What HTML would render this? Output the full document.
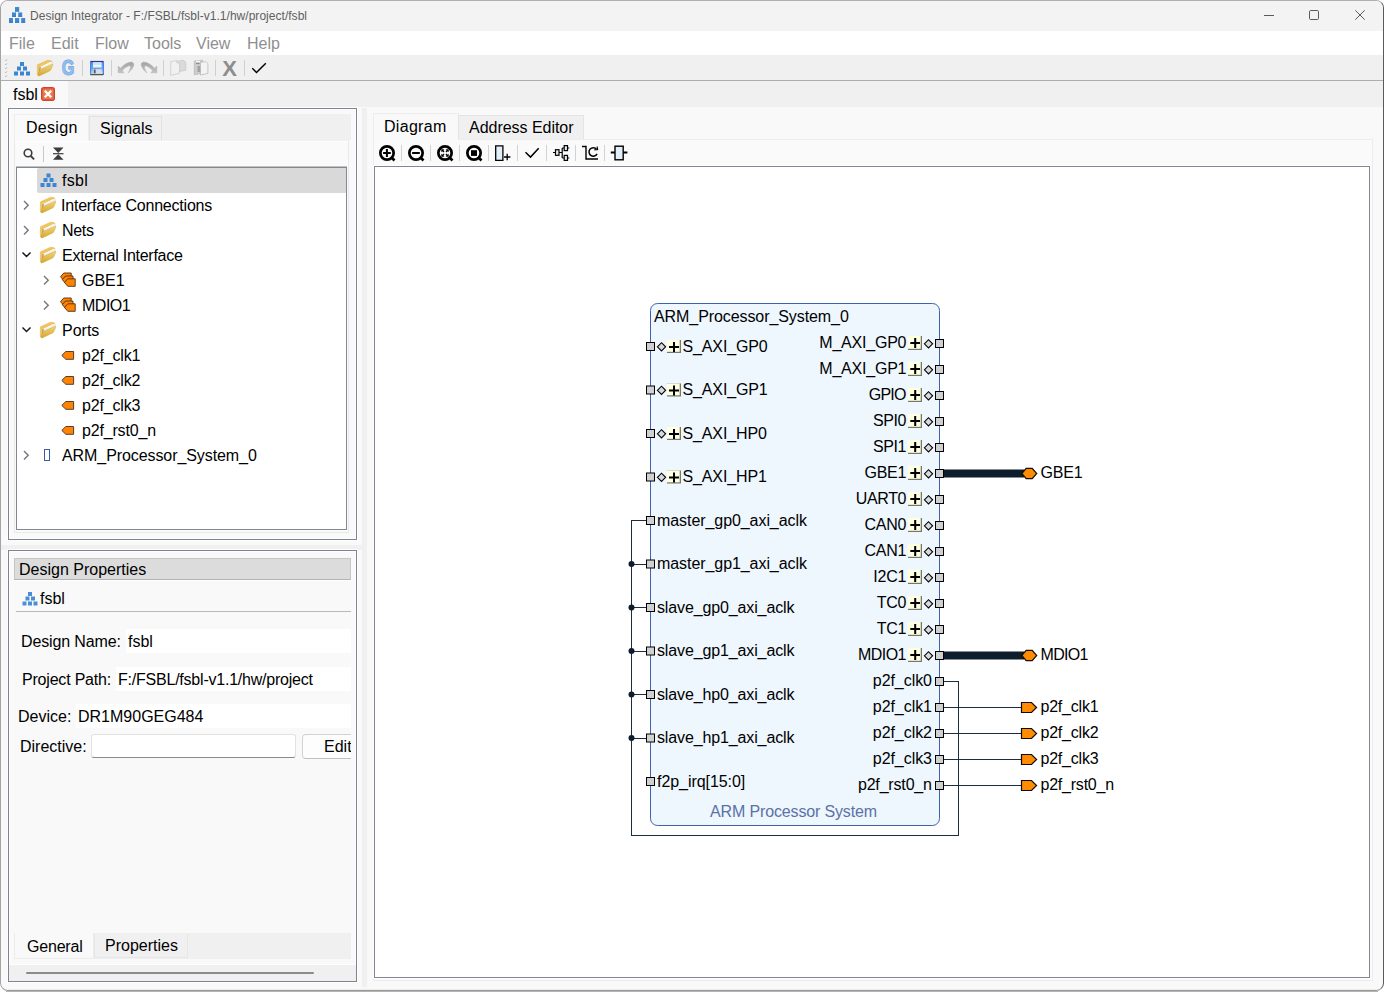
<!DOCTYPE html>
<html><head><meta charset="utf-8"><title>Design Integrator</title>
<style>
*{box-sizing:border-box;margin:0;padding:0}
html,body{width:1384px;height:992px;overflow:hidden;background:#fff}
body{position:relative;font-family:"Liberation Sans",sans-serif;font-size:16px;color:#000}
.a{position:absolute}
.t{position:absolute;white-space:nowrap;line-height:20px;height:20px}
#win{left:0;top:0;width:1384px;height:991px;border:1px solid #9a9a9a;border-left-color:#a4a4a4;border-right-color:#5a5a5a;border-top-color:#b0b0b0;border-radius:8px;background:#f9f9f9;overflow:hidden}
.frame{border:1px solid #7d8390;box-shadow:inset 1px 1px 0 #fff, inset -1px -1px 0 #fff, 0 0 0 1px #fefefe}
.sunk{border:1px solid #818793;background:#fff}
.sep{position:absolute;width:1px;background:#cfcfcf}
</style></head><body>
<div id="win" class="a"></div>
<!-- title bar -->
<div class="a" style="left:1px;top:1px;width:1382px;height:30px;background:#f3f3f3;border-radius:7px 7px 0 0"></div>
<svg class="a" style="left:8px;top:6px" width="18" height="18" viewBox="0 0 18 18">
<defs><linearGradient id="pb" x1="0" y1="0" x2="0" y2="1"><stop offset="0" stop-color="#3f8fd8"/><stop offset="1" stop-color="#3a7fc4"/></linearGradient></defs>
<g fill="url(#pb)"><rect x="7" y="1" width="4.2" height="4.8"/><rect x="4" y="6.4" width="4" height="4.6"/><rect x="10.2" y="6.4" width="4" height="4.6"/><rect x="1" y="12" width="4" height="5"/><rect x="7" y="12" width="4.2" height="5"/><rect x="13.2" y="12" width="4" height="5"/></g>
</svg>
<div class="t" style="left:30px;top:6px;font-size:12px;color:#5f5f5f;letter-spacing:0.03px">Design Integrator - F:/FSBL/fsbl-v1.1/hw/project/fsbl</div>
<svg class="a" style="left:1255px;top:5px" width="120" height="20" viewBox="0 0 120 20" fill="none" stroke="#5a5a5a" stroke-width="1">
<path d="M9 10.5h10"/><rect x="54.5" y="5.5" width="9" height="9" rx="1.2"/><path d="M100.3 5.3l9.4 9.4M109.7 5.3l-9.4 9.4"/>
</svg>
<!-- menu bar -->
<div class="a" style="left:1px;top:31px;width:1382px;height:24px;background:#fff"></div>
<div class="t mn" style="left:9px">File</div>
<div class="t mn" style="left:51px">Edit</div>
<div class="t mn" style="left:95px">Flow</div>
<div class="t mn" style="left:144px">Tools</div>
<div class="t mn" style="left:196px">View</div>
<div class="t mn" style="left:247px">Help</div>
<style>.mn{top:34px;color:#8f8f8f;font-size:16px}</style>
<!-- toolbar -->
<div class="a" style="left:1px;top:55px;width:1382px;height:25px;background:#f0f0f0"></div>
<div class="a" style="left:1px;top:80px;width:1382px;height:1px;background:#adadad"></div>
<!-- doc tab strip -->
<div class="a" style="left:1px;top:81px;width:1382px;height:26px;background:#f0f0f0"></div>
<div class="a" style="left:1px;top:81px;width:67px;height:26px;background:#f9f9f9"></div>
<div class="t" style="left:13px;top:85px">fsbl</div>
<svg class="a" style="left:41px;top:87px" width="14" height="14" viewBox="0 0 14 14"><rect x="0.7" y="0.7" width="12.6" height="12.6" rx="2" fill="#e47a4f" stroke="#d93c2b" stroke-width="1.400"/><path d="M3.800 3.800l6.400 6.400M10.200 3.800l-6.400 6.400" stroke="#fff" stroke-width="2.300"/></svg>
<div class="a" style="left:6px;top:991px;width:1372px;height:1px;background:#b4b4b4"></div>
<div class="a" style="left:8px;top:989px;width:1368px;height:1px;background:#ececec"></div>
<!-- main toolbar icons -->
<svg class="a" style="left:0;top:55px" width="280" height="26" viewBox="0 0 280 26">
<defs>
<linearGradient id="fy" x1="0" y1="0" x2="0" y2="1"><stop offset="0" stop-color="#f3d57a"/><stop offset="1" stop-color="#d6a62c"/></linearGradient>
<linearGradient id="sv" x1="0" y1="0" x2="0" y2="1"><stop offset="0" stop-color="#4f86ea"/><stop offset="0.6" stop-color="#6fa8f4"/><stop offset="1" stop-color="#b4dcff"/></linearGradient>
<linearGradient id="gr" x1="0" y1="0" x2="0" y2="1"><stop offset="0" stop-color="#a2a2a2"/><stop offset="1" stop-color="#c4c4c4"/></linearGradient>
<g id="foldT"><path d="M0.400 4.800L10 0.400Q10.800 0.100 11.800 0.300L14.200 0.800Q15 1.100 15 2L15 4.500L3 10L1.200 14.800Q0.300 14.800 0.300 13.500Z" fill="#f3c45c" stroke="#dca93c" stroke-width="0.4"/>
<path d="M2 14L3.200 7L14.300 1.800L15.300 3.600L15.100 4.800L4 10Z" fill="#eef1f6"/><path d="M3.200 7L14.300 1.800L14.600 2.400L3.800 7.500Z" fill="#fff"/><path d="M1.800 14.500L2.700 7.300L3.700 6.900L3.100 12Z" fill="#94835a"/>
<path d="M0.600 15L2.600 10.400Q3 9.600 3.800 9.200L14.900 4.300Q16.100 4 15.800 5.200L13.800 9.800Q13.400 10.600 12.600 11L2.600 15.800Q1 16.200 0.600 15Z" fill="url(#fy)" stroke="#c69c30" stroke-width="0.4"/></g>
</defs>
<!-- grip -->
<g stroke="#a4a4a4" stroke-width="1"><path d="M5.300 6l1.500-1.500M5.300 10l1.500-1.500M5.300 14l1.500-1.500M5.300 18l1.500-1.500M5.300 22l1.500-1.500"/></g>
<!-- hierarchy -->
<g fill="#3b86d2"><rect x="20" y="7" width="4" height="4"/><rect x="17" y="11.500" width="4" height="4"/><rect x="23" y="11.500" width="4" height="4"/><rect x="14" y="16.500" width="4" height="4"/><rect x="20" y="16.500" width="4" height="4"/><rect x="26" y="16.500" width="4" height="4"/></g>
<!-- folder -->
<use href="#foldT" x="37" y="5"/>
<!-- G -->
<text x="0" y="0" transform="translate(61.800 20.300) scale(0.760 1)" font-family="'Liberation Sans',sans-serif" font-size="21.500" font-weight="bold" fill="#8fbcee" stroke="#5896e2" stroke-width="0.900" paint-order="stroke">G</text>
<!-- save -->
<g>
<rect x="90.500" y="6.500" width="13" height="13" rx="0.6" fill="url(#sv)" stroke="#4a84e4" stroke-width="1"/>
<path d="M90.500 6.500h13" stroke="#3a2f96" stroke-width="1.200"/><path d="M90.300 19.600h12.400l1 -1" stroke="#4a525c" stroke-width="1.100" fill="none"/>
<rect x="93" y="7.300" width="8.500" height="5.200" fill="#f2fbfb"/>
<rect x="93" y="8.400" width="8.500" height="1.200" fill="#a9dcde"/><rect x="93" y="10.800" width="8.500" height="0.800" fill="#cfeeee"/>
<rect x="92.700" y="14.200" width="9" height="4.600" fill="#d9dde0"/>
<rect x="93.800" y="14.500" width="1.800" height="3.800" fill="#55595e"/>
</g>
<!-- undo / redo -->
<g fill="url(#gr)" stroke="#b0b0b0" stroke-width="0.5" transform="translate(0 1)">
<path id="und" d="M118.200 10V16.800H124L122.200 14.600Q125.500 10.800 129 9.800Q131 9.600 130.500 11.500Q130 14 128.300 16.900Q132.500 13.500 133.800 9.500Q134.300 6.500 131.500 6Q126.500 6 120.300 12.200Z"/>
<use href="#und" transform="translate(275 0) scale(-1 1)"/>
</g>
<!-- copy -->
<g stroke="#c6c6c6" stroke-width="0.7">
<path d="M177 6.300L183.500 5.300L185.800 7.300L185.800 15.300L177 17Z" fill="#dadada"/>
<path d="M170.700 6.600L176.800 5.600L179.500 8L179.500 18.300L170.700 20.400Z" fill="#f1f1f1"/>
<path d="M176.800 5.600L176.800 8L179.500 8" fill="#e2e2e2"/>
</g>
<!-- paste -->
<g stroke="#b4b4b4" stroke-width="0.7">
<path d="M194.300 6L202.500 5.200L202.800 18.200L194.300 19.800Z" fill="#cdcdcd"/>
<rect x="196" y="5.800" width="4" height="1.600" fill="#f8f8f8" stroke="none"/><rect x="196" y="7.800" width="3.600" height="1.300" fill="#8e8e8e" stroke="none"/>
<rect x="197.500" y="11" width="5" height="6" fill="#a2a2a2" stroke="none"/>
<path d="M200.500 7.400L205.800 6.600L207.900 8.600L207.900 18.400L200.500 20Z" fill="#f3f3f3"/>
</g>
<text x="222.200" y="20.800" font-family="'Liberation Sans',sans-serif" font-size="22" font-weight="bold" fill="#8d8d8d">X</text>
<!-- check -->
<path d="M252.300 13.300L256.500 17.500L265.800 8.300" fill="none" stroke="#000" stroke-width="1.500"/>
</svg>
<div class="sep" style="left:82px;top:60px;height:16px"></div>
<div class="sep" style="left:111px;top:60px;height:16px"></div>
<div class="sep" style="left:163px;top:60px;height:16px"></div>
<div class="sep" style="left:215px;top:60px;height:16px"></div>
<div class="sep" style="left:244px;top:60px;height:16px"></div>
<!-- left top frame -->
<div class="a frame" style="left:8px;top:108px;width:349px;height:432px;background:#f9f9f9"></div>
<div class="a" style="left:14px;top:114px;width:337px;height:26px;background:#f0f0f0"></div>
<div class="a" style="left:14px;top:114px;width:75px;height:27px;background:#f9f9f9;border:1px solid #eeeeee;border-bottom:none"></div>
<div class="a" style="left:89px;top:116px;width:73px;height:24px;background:#f0f0f0;border:1px solid #e2e2e2;border-bottom:none"></div>
<div class="t" style="left:26px;top:118px;letter-spacing:0.3px">Design</div>
<div class="t" style="left:100px;top:119px">Signals</div>
<div class="a" style="left:14px;top:140px;width:335px;height:393px;background:#fafafa;border:1px solid #e9e9e9;border-top:none"></div><div class="a" style="left:89px;top:140px;width:260px;height:1px;background:#f0f0f0"></div><div class="a" style="left:15px;top:141px;width:333px;height:1px;background:#fefefe"></div>
<svg class="a" style="left:20px;top:144px" width="50" height="20" viewBox="0 0 50 20">
<circle cx="8" cy="9" r="3.8" fill="none" stroke="#3c3c3c" stroke-width="1.6"/><path d="M10.800 12l3.300 3.400" stroke="#3c3c3c" stroke-width="1.800"/>
<path d="M33 3.500h10.500l-5.250 5.500zM33 15.800h10.500l-5.250 -5.500z" fill="#3c3c3c"/><path d="M33 9.700h10.500" stroke="#3c3c3c" stroke-width="1.2"/>
</svg>
<div class="sep" style="left:43px;top:146px;height:16px;background:#c8c8c8"></div>
<div class="a" style="left:16px;top:166px;width:331px;height:1px;background:#c2c2be"></div><div class="a sunk" style="left:16px;top:167px;width:331px;height:363px"></div>
<div class="a" style="left:37px;top:168px;width:309px;height:25px;background:#d9d9d9;border-radius:2px 0 0 2px"></div>
<style>
.tr{position:absolute;white-space:nowrap;line-height:20px;height:20px}
.chev{position:absolute;width:10px;height:10px}
</style>
<!-- tree rows: centre y = 180 + 25k -->
<svg class="a" style="left:40px;top:172px" width="18" height="16" viewBox="0 0 18 16"><g fill="#3b86d2"><rect x="6.500" y="1.500" width="4" height="4"/><rect x="3.500" y="6" width="4" height="4"/><rect x="9.500" y="6" width="4" height="4"/><rect x="0.500" y="11" width="4" height="4"/><rect x="6.500" y="11" width="4" height="4"/><rect x="12.500" y="11" width="4" height="4"/></g></svg>
<div class="tr" style="left:62px;top:171px;letter-spacing:0.3px">fsbl</div>
<div class="tr" style="left:61px;top:196px;letter-spacing:-0.22px">Interface Connections</div>
<div class="tr" style="left:62px;top:221px;letter-spacing:-0.3px">Nets</div>
<div class="tr" style="left:62px;top:246px;letter-spacing:-0.27px">External Interface</div>
<div class="tr" style="left:82px;top:271px">GBE1</div>
<div class="tr" style="left:82px;top:296px;letter-spacing:-0.5px">MDIO1</div>
<div class="tr" style="left:62px;top:321px">Ports</div>
<div class="tr" style="left:82px;top:346px;letter-spacing:-0.17px">p2f_clk1</div>
<div class="tr" style="left:82px;top:371px;letter-spacing:-0.17px">p2f_clk2</div>
<div class="tr" style="left:82px;top:396px;letter-spacing:-0.17px">p2f_clk3</div>
<div class="tr" style="left:82px;top:421px;letter-spacing:-0.17px">p2f_rst0_n</div>
<div class="tr" style="left:62px;top:446px;letter-spacing:-0.08px">ARM_Processor_System_0</div>
<svg class="a" style="left:16px;top:166px" width="80" height="364" viewBox="0 0 80 364">
<defs>
<linearGradient id="fy2" x1="0" y1="0" x2="0" y2="1"><stop offset="0" stop-color="#f3d57a"/><stop offset="1" stop-color="#d6a62c"/></linearGradient>
<g id="fold"><path d="M0.400 4.800L10 0.400Q10.800 0.100 11.800 0.300L14.200 0.800Q15 1.100 15 2L15 4.500L3 10L1.200 14.800Q0.300 14.800 0.300 13.500Z" fill="#f3c45c" stroke="#dca93c" stroke-width="0.4"/>
<path d="M2 14L3.200 7L14.300 1.800L15.300 3.600L15.100 4.800L4 10Z" fill="#eef1f6"/><path d="M3.200 7L14.300 1.800L14.600 2.400L3.800 7.500Z" fill="#fff"/><path d="M1.800 14.500L2.700 7.300L3.700 6.900L3.100 12Z" fill="#94835a"/>
<path d="M0.600 15L2.600 10.400Q3 9.600 3.800 9.200L14.900 4.300Q16.100 4 15.800 5.200L13.800 9.800Q13.400 10.600 12.600 11L2.600 15.800Q1 16.200 0.600 15Z" fill="url(#fy2)" stroke="#c69c30" stroke-width="0.4"/></g>
<g id="cr"><path d="M0 0l4.200 4.200l-4.200 4.200" fill="none" stroke="#777" stroke-width="1.4"/></g>
<g id="cd"><path d="M0 0l4 4l4 -4" fill="none" stroke="#1a1a1a" stroke-width="1.5"/></g>
<g id="pt"><path d="M4.800 1.500h7.800v7.800h-7.800l-4 -3.900z" fill="#ff8200" stroke="#54402e" stroke-width="1"/></g>
<g id="ifc" fill="#ff8200" stroke="#4e3210" stroke-width="0.9"><path d="M0.5 4.2L3.8 0.5H11.2V8.0H3.8Z"/><path d="M2.3 7.2L5.6 3.5H13.0V11.0H5.6Z"/><path d="M4.5 10.0L7.8 6.3H15.2V13.8H7.8Z"/></g>
</defs>
<use href="#cr" x="8" y="35"/><use href="#fold" x="24" y="31"/>
<use href="#cr" x="8" y="60"/><use href="#fold" x="24" y="56"/>
<use href="#cd" x="6.500" y="86.500"/><use href="#fold" x="24" y="81"/>
<use href="#cr" x="28" y="110"/><use href="#ifc" x="44" y="106.500"/>
<use href="#cr" x="28" y="135"/><use href="#ifc" x="44" y="131.500"/>
<use href="#cd" x="6.500" y="161.500"/><use href="#fold" x="24" y="156"/>
<use href="#pt" x="45" y="184"/><use href="#pt" x="45" y="209"/><use href="#pt" x="45" y="234"/><use href="#pt" x="45" y="259"/>
<use href="#cr" x="8" y="285"/>
<rect x="28.500" y="283.500" width="5" height="11" fill="#fff" stroke="#3c5aa0" stroke-width="1"/>
</svg>
<!-- splitters -->
<div class="a" style="left:1px;top:545px;width:361px;height:5px;background:#f0f0f0"></div>
<div class="a" style="left:362px;top:108px;width:5px;height:879px;background:#f0f0f0"></div>
<!-- properties frame -->
<div class="a frame" style="left:8px;top:550px;width:349px;height:432px;background:#f9f9f9"></div>
<div class="a" style="left:14px;top:558px;width:337px;height:22px;background:#dcdcdc;border:1px solid #c6c6c6;border-bottom:1px solid #b4b4b4;box-shadow:0 1px 0 #fff"></div>
<div class="t" style="left:19px;top:560px;letter-spacing:0px">Design Properties</div>
<svg class="a" style="left:22px;top:591px" width="18" height="16" viewBox="0 0 18 16"><g fill="#4a8fd6"><rect x="6" y="1" width="4" height="4"/><rect x="3.500" y="5.500" width="4" height="4"/><rect x="9" y="5.500" width="4" height="4"/><rect x="0.500" y="10.500" width="4" height="4"/><rect x="6" y="10.500" width="4" height="4"/><rect x="11.500" y="10.500" width="4" height="4"/></g></svg>
<div class="t" style="left:40px;top:589px">fsbl</div>
<div class="a" style="left:16px;top:611px;width:335px;height:1px;background:#b9b9b9"></div>
<div class="a" style="left:126px;top:629px;width:225px;height:24px;background:#fff"></div>
<div class="a" style="left:116px;top:667px;width:235px;height:24px;background:#fff"></div>
<div class="a" style="left:76px;top:704px;width:275px;height:24px;background:#fff"></div>
<div class="t" style="left:21px;top:632px;letter-spacing:-0.13px">Design Name:</div>
<div class="t" style="left:128px;top:632px">fsbl</div>
<div class="t" style="left:22px;top:670px;letter-spacing:-0.2px">Project Path:</div>
<div class="t" style="left:118px;top:670px;letter-spacing:-0.22px">F:/FSBL/fsbl-v1.1/hw/project</div>
<div class="t" style="left:18px;top:707px">Device:</div>
<div class="t" style="left:78px;top:707px">DR1M90GEG484</div>
<div class="t" style="left:20px;top:737px">Directive:</div>
<div class="a" style="left:91px;top:734px;width:205px;height:24px;background:#fff;border:1px solid #e2e2e2;border-bottom:1px solid #8a8a8a;border-radius:3px"></div>
<div class="a" style="left:14px;top:730px;width:337px;height:32px;overflow:hidden">
 <div class="a" style="left:288px;top:4px;width:70px;height:25px;background:#fdfdfd;border:1px solid #d2d2d2;border-bottom-color:#c0c0c0;border-radius:4px"></div>
 <div class="t" style="left:310px;top:7px">Edit</div>
</div>
<!-- bottom tabs -->
<div class="a" style="left:14px;top:933px;width:337px;height:26px;background:#f0f0f0"></div>
<div class="a" style="left:14px;top:933px;width:80px;height:26px;background:#f9f9f9;border:1px solid #ececec;border-top:none"></div>
<div class="a" style="left:94px;top:934px;width:94px;height:24px;border:1px solid #e6e6e6;border-top:none;background:#f0f0f0"></div>
<div class="t" style="left:27px;top:937px;letter-spacing:-0.2px">General</div>
<div class="t" style="left:105px;top:936px">Properties</div>
<!-- h scrollbar -->
<div class="a" style="left:9px;top:964px;width:347px;height:1px;background:#fff"></div><div class="a" style="left:9px;top:965px;width:347px;height:16px;background:#f0f0f0"></div>
<div class="a" style="left:26px;top:972px;width:288px;height:2px;background:#8b8b8b;border-radius:1px"></div>
<!-- right panel tabs -->
<div class="a" style="left:373px;top:139px;width:1000px;height:842px;border:1px solid #ececec;background:#fafafa"></div>
<div class="a" style="left:373px;top:113px;width:86px;height:27px;background:#f9f9f9;border:1px solid #ededed;border-bottom:none"></div>
<div class="a" style="left:458px;top:115px;width:126px;height:24px;background:#f0f0f0;border:1px solid #e4e4e4;border-bottom:none"></div>
<div class="t" style="left:384px;top:117px;letter-spacing:0.3px">Diagram</div>
<div class="t" style="left:469px;top:118px;letter-spacing:-0.03px">Address Editor</div>
<!-- diagram toolbar -->
<svg class="a" style="left:374px;top:140px" width="270" height="26" viewBox="0 0 270 26">
<g fill="none" stroke="#000">
<g stroke-width="2.700"><circle cx="13" cy="13" r="6.650"/><circle cx="42" cy="13" r="6.650"/><circle cx="71" cy="13" r="6.650"/><circle cx="100" cy="13" r="6.650"/>
<path d="M17.800 17.800l2.700 2.700M46.800 17.800l2.700 2.700M75.800 17.800l2.700 2.700M104.800 17.800l2.700 2.700"/></g>
<path d="M9.100 13.100h7.700M12.900 9.100v7.900M38.100 13.100h7.700" stroke-width="2"/>
<path d="M121.700 5.900h7.200v14.400h-7.200z" fill="#e3eff8" stroke-width="1.300"/><path d="M130 17h6.400M133.200 13.800v6.400" stroke-width="1.300"/>
<path d="M151.500 12.300l5 4.800l8.200 -8.800" stroke-width="1.500"/>
<g stroke-width="1.200"><path d="M179 12.500h2.500M185 12.500h3.200M188.200 8v10M188.200 8h2M188.200 18h2M193.500 8h1.800M193.500 18h1.800"/><rect x="181.500" y="9.700" width="3.500" height="5.600" fill="#e3eff8"/><rect x="190.200" y="5.600" width="3.300" height="5" fill="#e3eff8"/><rect x="190.200" y="15.400" width="3.300" height="5" fill="#e3eff8"/></g>
<path d="M208 6.500h4v12.500h12" stroke-width="1.400"/><path d="M222.500 9.300a4.200 4.200 0 1 0 0.500 4.500" stroke-width="1.500"/><path d="M220.300 9.800l3.300 -0.300l-0.500 -3" stroke-width="1.200"/>
<path d="M236.800 12.500h4.200M249.200 12.500h4.200" stroke-width="2"/><rect x="241" y="6.200" width="8.200" height="13.600" fill="#e3eff8" stroke-width="1.400"/>
</g>
<g fill="#000"><rect x="97" y="10.200" width="6" height="5.700"/>
<path d="M67.300 9.300h3l-0.900 0.900l1.100 1.100l-1.100 1.100l-1.100 -1.100l-1 1zM74.700 9.300h-3l0.900 0.900l-1.100 1.100l1.100 1.100l1.100 -1.100l1 1zM67.300 16.700h3l-0.900 -0.900l1.100 -1.100l-1.100 -1.100l-1.100 1.100l-1 -1zM74.700 16.700h-3l0.900 -0.900l-1.100 -1.100l1.100 -1.100l1.100 1.100l1 -1z"/></g>
<g stroke="#d2d2d2" stroke-width="1"><path d="M27.500 5v16M56.500 5v16M85.500 5v16M114.500 5v16M143.500 5v16M172.500 5v16M201.500 5v16M230.500 5v16"/></g>
</svg>
<!-- canvas -->
<div class="a" style="left:374px;top:165px;width:996px;height:1px;background:#c2c2be"></div>
<div class="a" style="left:374px;top:166px;width:996px;height:812px;background:#fff;border:1px solid #818793;box-shadow:0 0 0 1px #fdfdfd"></div>
<!-- diagram -->
<svg class="a" style="left:0;top:0" width="1384" height="992" viewBox="0 0 1384 992" font-family="'Liberation Sans',sans-serif" font-size="16">
<defs>
<g id="sq"><rect x="-4" y="-4" width="8" height="8" fill="#d0d0d0" stroke="#000" stroke-width="1"/></g>
<g id="dm"><path d="M-4.100 0.300L0 -3.800L4.100 0.300L0 4.400Z" fill="#d9d9d9" stroke="#000" stroke-width="1.100"/></g>
<g id="pl"><rect x="0" y="-6.500" width="14" height="13" fill="#77776a"/><rect x="0" y="-6.500" width="12.700" height="11.800" fill="#ffffe1"/><path d="M2 0.500h10M7 -4.500v10" stroke="#000" stroke-width="2" fill="none"/></g>
<g id="pr"><rect x="0" y="-7.500" width="14" height="14" fill="#77776a"/><rect x="0" y="-7.500" width="12.700" height="12.800" fill="#ffffe1"/><path d="M2.300 -0.500h9.700M7.200 -5.500v10" stroke="#000" stroke-width="2" fill="none"/></g>
<g id="hx"><path d="M-7.700 0L-3.300 -5.200L2.700 -5.200L7.200 0L2.700 5.200L-3.300 5.200Z" fill="#ff8c00" stroke="#140d05" stroke-width="1.200"/></g>
<g id="pn"><path d="M-7.500 -5H2.500L7.600 0L2.500 5H-7.500Z" fill="#ff8c00" stroke="#0c0c0c" stroke-width="1.200"/></g>
</defs>
<g fill="none" stroke="#1b2d3f" stroke-width="1" shape-rendering="crispEdges">
<path d="M646 520.500H631.500V835.500H958.500V681.500H944"/>
<path d="M631.500 564H646"/>
<path d="M631.500 607.5H646"/>
<path d="M631.500 651H646"/>
<path d="M631.500 694.5H646"/>
<path d="M631.500 738H646"/>
<path d="M944 707.5H1021"/>
<path d="M944 733.5H1021"/>
<path d="M944 759.5H1021"/>
<path d="M944 785.5H1021"/>
</g>
<g fill="#0d1d2b">
<circle cx="631.500" cy="564" r="3"/>
<circle cx="631.500" cy="607.5" r="3"/>
<circle cx="631.500" cy="651" r="3"/>
<circle cx="631.500" cy="694.5" r="3"/>
<circle cx="631.500" cy="738" r="3"/>
<rect x="944" y="469.500" width="80" height="8"/><rect x="944" y="651.500" width="80" height="8"/>
</g>
<rect x="650.500" y="303.500" width="289" height="522" rx="7" ry="7" fill="#eef6fe" stroke="#4061ad" stroke-width="1"/>
<text x="654" y="322" letter-spacing="-0.08">ARM_Processor_System_0</text>
<text x="793.500" y="817" text-anchor="middle" fill="#5b72a6" letter-spacing="-0.15">ARM Processor System</text>
<use href="#sq" x="650.500" y="346.5"/>
<use href="#dm" x="661.500" y="346.5"/><use href="#pl" x="667" y="346.5"/>
<text x="682.500" y="351.5" letter-spacing="-0.13">S_AXI_GP0</text>
<use href="#sq" x="650.500" y="390"/>
<use href="#dm" x="661.500" y="390"/><use href="#pl" x="667" y="390"/>
<text x="682.500" y="395" letter-spacing="-0.13">S_AXI_GP1</text>
<use href="#sq" x="650.500" y="433.5"/>
<use href="#dm" x="661.500" y="433.5"/><use href="#pl" x="667" y="433.5"/>
<text x="682.500" y="438.5" letter-spacing="-0.13">S_AXI_HP0</text>
<use href="#sq" x="650.500" y="477"/>
<use href="#dm" x="661.500" y="477"/><use href="#pl" x="667" y="477"/>
<text x="682.500" y="482" letter-spacing="-0.13">S_AXI_HP1</text>
<use href="#sq" x="650.500" y="520.5"/>
<text x="657" y="525.5" letter-spacing="-0.07">master_gp0_axi_aclk</text>
<use href="#sq" x="650.500" y="564"/>
<text x="657" y="569" letter-spacing="-0.07">master_gp1_axi_aclk</text>
<use href="#sq" x="650.500" y="607.5"/>
<text x="657" y="612.5" letter-spacing="-0.13">slave_gp0_axi_aclk</text>
<use href="#sq" x="650.500" y="651"/>
<text x="657" y="656" letter-spacing="-0.13">slave_gp1_axi_aclk</text>
<use href="#sq" x="650.500" y="694.5"/>
<text x="657" y="699.5" letter-spacing="-0.13">slave_hp0_axi_aclk</text>
<use href="#sq" x="650.500" y="738"/>
<text x="657" y="743" letter-spacing="-0.13">slave_hp1_axi_aclk</text>
<use href="#sq" x="650.500" y="781.5"/>
<text x="657" y="786.5" letter-spacing="-0.06">f2p_irq[15:0]</text>
<use href="#sq" x="939.500" y="343.5"/>
<use href="#dm" x="928.500" y="343.5"/><use href="#pr" x="908" y="343.5"/>
<text x="906.28" y="348" text-anchor="end" letter-spacing="-0.22">M_AXI_GP0</text>
<use href="#sq" x="939.500" y="369.5"/>
<use href="#dm" x="928.500" y="369.5"/><use href="#pr" x="908" y="369.5"/>
<text x="906.28" y="374" text-anchor="end" letter-spacing="-0.22">M_AXI_GP1</text>
<use href="#sq" x="939.500" y="395.5"/>
<use href="#dm" x="928.500" y="395.5"/><use href="#pr" x="908" y="395.5"/>
<text x="905.77" y="400" text-anchor="end" letter-spacing="-0.73">GPIO</text>
<use href="#sq" x="939.500" y="421.5"/>
<use href="#dm" x="928.500" y="421.5"/><use href="#pr" x="908" y="421.5"/>
<text x="906.08" y="426" text-anchor="end" letter-spacing="-0.42">SPI0</text>
<use href="#sq" x="939.500" y="447.5"/>
<use href="#dm" x="928.500" y="447.5"/><use href="#pr" x="908" y="447.5"/>
<text x="906.08" y="452" text-anchor="end" letter-spacing="-0.42">SPI1</text>
<use href="#sq" x="939.500" y="473.5"/>
<use href="#dm" x="928.500" y="473.5"/><use href="#pr" x="908" y="473.5"/>
<text x="906.3" y="478" text-anchor="end" letter-spacing="-0.2">GBE1</text>
<use href="#sq" x="939.500" y="499.5"/>
<use href="#dm" x="928.500" y="499.5"/><use href="#pr" x="908" y="499.5"/>
<text x="906.16" y="504" text-anchor="end" letter-spacing="-0.34">UART0</text>
<use href="#sq" x="939.500" y="525.5"/>
<use href="#dm" x="928.500" y="525.5"/><use href="#pr" x="908" y="525.5"/>
<text x="906.3" y="530" text-anchor="end" letter-spacing="-0.2">CAN0</text>
<use href="#sq" x="939.500" y="551.5"/>
<use href="#dm" x="928.500" y="551.5"/><use href="#pr" x="908" y="551.5"/>
<text x="906.3" y="556" text-anchor="end" letter-spacing="-0.2">CAN1</text>
<use href="#sq" x="939.500" y="577.5"/>
<use href="#dm" x="928.500" y="577.5"/><use href="#pr" x="908" y="577.5"/>
<text x="906.35" y="582" text-anchor="end" letter-spacing="-0.15">I2C1</text>
<use href="#sq" x="939.500" y="603.5"/>
<use href="#dm" x="928.500" y="603.5"/><use href="#pr" x="908" y="603.5"/>
<text x="906.27" y="608" text-anchor="end" letter-spacing="-0.23">TC0</text>
<use href="#sq" x="939.500" y="629.5"/>
<use href="#dm" x="928.500" y="629.5"/><use href="#pr" x="908" y="629.5"/>
<text x="906.27" y="634" text-anchor="end" letter-spacing="-0.23">TC1</text>
<use href="#sq" x="939.500" y="655.5"/>
<use href="#dm" x="928.500" y="655.5"/><use href="#pr" x="908" y="655.5"/>
<text x="905.95" y="660" text-anchor="end" letter-spacing="-0.55">MDIO1</text>
<use href="#sq" x="939.500" y="681.5"/>
<text x="931.94" y="686" text-anchor="end" letter-spacing="-0.06">p2f_clk0</text>
<use href="#sq" x="939.500" y="707.5"/>
<text x="931.94" y="712" text-anchor="end" letter-spacing="-0.06">p2f_clk1</text>
<use href="#sq" x="939.500" y="733.5"/>
<text x="931.94" y="738" text-anchor="end" letter-spacing="-0.06">p2f_clk2</text>
<use href="#sq" x="939.500" y="759.5"/>
<text x="931.94" y="764" text-anchor="end" letter-spacing="-0.06">p2f_clk3</text>
<use href="#sq" x="939.500" y="785.5"/>
<text x="931.83" y="790" text-anchor="end" letter-spacing="-0.17">p2f_rst0_n</text>
<use href="#hx" x="1029.500" y="473.5"/><text x="1040.500" y="478" letter-spacing="-0.2">GBE1</text>
<use href="#hx" x="1029.500" y="655.5"/><text x="1040.500" y="660" letter-spacing="-0.7">MDIO1</text>
<use href="#pn" x="1029" y="707.5"/><text x="1040.500" y="712" letter-spacing="-0.22">p2f_clk1</text>
<use href="#pn" x="1029" y="733.5"/><text x="1040.500" y="738" letter-spacing="-0.22">p2f_clk2</text>
<use href="#pn" x="1029" y="759.5"/><text x="1040.500" y="764" letter-spacing="-0.22">p2f_clk3</text>
<use href="#pn" x="1029" y="785.5"/><text x="1040.500" y="790" letter-spacing="-0.22">p2f_rst0_n</text>
</svg>
</body></html>
